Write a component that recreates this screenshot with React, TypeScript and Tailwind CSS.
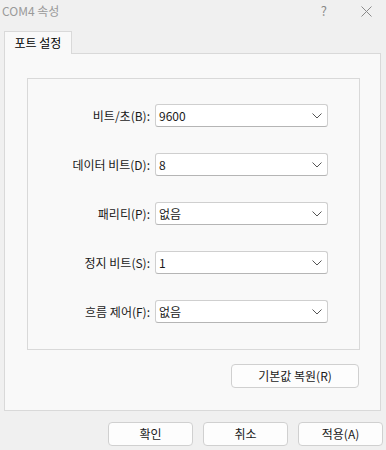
import React from "react";

const font = { fontFamily: '"Noto Sans CJK KR", "Noto Sans", sans-serif' };

function Chevron() {
  return (
    <svg width="10" height="6" viewBox="0 0 10 6" className="shrink-0">
      <path d="M0.5 0.5 L5 5 L9.5 0.5" fill="none" stroke="#555" strokeWidth="1" />
    </svg>
  );
}

function Row({ label, value }: { label: string; value: string }) {
  return (
    <div className="flex items-center h-[23px]">
      <div className="w-[127px] text-right pr-[5px] text-[12px] text-[#1a1a1a]">{label}</div>
      <div className="w-[173px] h-[23px] bg-white border border-[#cfcfcf] border-b-[#b5b5b5] rounded-[3px] flex items-center pl-[3px] pr-[5px] justify-between">
        <span className="text-[12px] text-[#1a1a1a]">{value}</span>
        <Chevron />
      </div>
    </div>
  );
}

function Btn({ children, w }: { children: React.ReactNode; w: string }) {
  return (
    <div className={`${w} h-[24px] bg-[#fdfdfd] border border-[#d0d0d0] rounded-[4px] flex items-center justify-center text-[12px] text-[#1a1a1a]`}>
      {children}
    </div>
  );
}

export default function App() {
  return (
    <div className="w-[386px] h-[450px] bg-[#f0f0f0] flex flex-col overflow-hidden" style={font}>
      <div className="h-[22px] flex items-center justify-between pl-[2px]">
        <span className="text-[12px] text-[#9a9a9a]">COM4 속성</span>
        <div className="flex items-center">
          <span className="text-[13px] text-[#8a8a8a] mr-[34px]">?</span>
          <svg width="11" height="11" viewBox="0 0 11 11" className="mr-[14px]">
            <path d="M0.5 0.5 L10.5 10.5 M10.5 0.5 L0.5 10.5" stroke="#8a8a8a" strokeWidth="1" />
          </svg>
        </div>
      </div>
      <div className="pt-[9px] pl-[4px] flex">
        <div className="relative z-10 mb-[-1px] w-[68px] h-[23px] bg-[#f9f9f9] border-l border-t border-r border-[#d9d9d9] flex items-center justify-center text-[12px] text-black">
          포트 설정
        </div>
      </div>
      <div className="ml-[4px] w-[377px] h-[358px] bg-[#f9f9f9] border border-[#d9d9d9] flex flex-col pl-[22px] pt-[24px]">
        <div className="w-[333px] h-[272px] border border-[#d9d9d9] flex flex-col pt-[25px] gap-[26px]">
          <Row label="비트/초(B):" value="9600" />
          <Row label="데이터 비트(D):" value="8" />
          <Row label="패리티(P):" value="없음" />
          <Row label="정지 비트(S):" value="1" />
          <Row label="흐름 제어(F):" value="없음" />
        </div>
        <div className="flex justify-end w-[333px] mt-[14px] pr-[1px]">
          <Btn w="w-[128px]">기본값 복원(R)</Btn>
        </div>
      </div>
      <div className="flex justify-end gap-[10px] mt-[11px] pr-[3px]">
        <Btn w="w-[85px]">확인</Btn>
        <Btn w="w-[85px]">취소</Btn>
        <Btn w="w-[85px]">적용(A)</Btn>
      </div>
    </div>
  );
}
